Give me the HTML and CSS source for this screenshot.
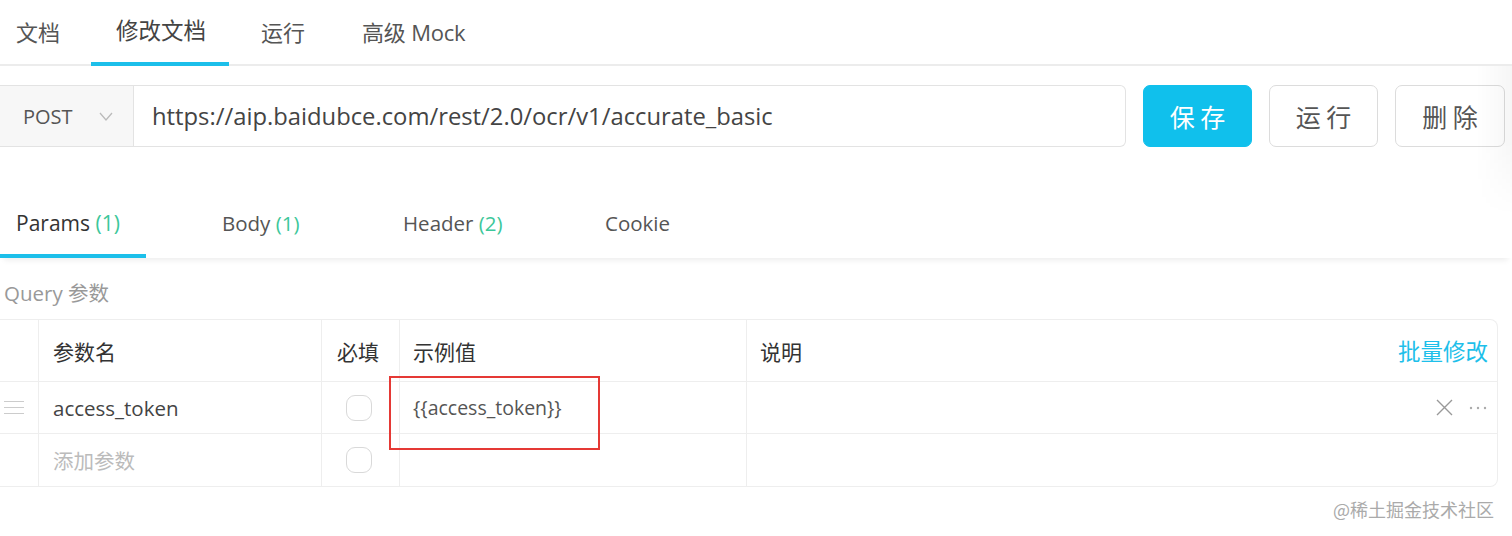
FILE: index.html
```html
<!DOCTYPE html>
<html lang="zh">
<head>
<meta charset="utf-8">
<link rel="stylesheet" href="styles.css">
</head>
<body>
<div class="page">
  <nav class="top-tabs">
    <div class="ttab">文档</div>
    <div class="ttab active">修改文档</div>
    <div class="ttab">运行</div>
    <div class="ttab">高级 Mock</div>
  </nav>

  <div class="url-row">
    <div class="url-box">
      <div class="method">POST
        <svg class="chev" width="14" height="9" viewBox="0 0 14 9"><path d="M1 1 L7 8 L13 1" fill="none" stroke="#bbb" stroke-width="1.3"/></svg>
      </div>
      <div class="url">https://aip.baidubce.com/rest/2.0/ocr/v1/accurate_basic</div>
    </div>
    <button class="btn primary">保 存</button>
    <button class="btn">运 行</button>
    <button class="btn last">删 除</button>
  </div>

  <nav class="sub-tabs">
    <div class="stab">Params <span class="cnt">(1)</span></div>
    <div class="stab">Body <span class="cnt">(1)</span></div>
    <div class="stab">Header <span class="cnt">(2)</span></div>
    <div class="stab">Cookie</div>
  </nav>

  <div class="section-title">Query 参数</div>

  <div class="table">
    <div class="row head">
      <div class="c c-handle"></div>
      <div class="c c-name">参数名</div>
      <div class="c c-req">必填</div>
      <div class="c c-val">示例值</div>
      <div class="c c-desc">说明<span class="bulk">批量修改</span></div>
    </div>
    <div class="row r1">
      <div class="c c-handle"><span class="grip"></span></div>
      <div class="c c-name">access_token</div>
      <div class="c c-req"><span class="chk"></span></div>
      <div class="c c-val"><span class="valtext">{{access_token}}</span><span class="hl"></span></div>
      <div class="c c-desc"><span class="acts">
        <svg width="17" height="17" viewBox="0 0 17 17"><path d="M1 1 L16 16 M16 1 L1 16" stroke="#999" stroke-width="1.4"/></svg>
        <svg width="18" height="4" viewBox="0 0 18 4"><circle cx="2" cy="2" r="1.2" fill="#aaa"/><circle cx="9" cy="2" r="1.2" fill="#aaa"/><circle cx="16" cy="2" r="1.2" fill="#aaa"/></svg>
      </span></div>
    </div>
    <div class="row r2">
      <div class="c c-handle"></div>
      <div class="c c-name ph">添加参数</div>
      <div class="c c-req"><span class="chk"></span></div>
      <div class="c c-val"></div>
      <div class="c c-desc"></div>
    </div>
  </div>

  <div class="edge-shade"></div>
  <div class="watermark">@稀土掘金技术社区</div>
</div>
</body>
</html>
```

FILE: styles.css
```css
* { box-sizing: border-box; }
html, body { margin: 0; padding: 0; background: #fff; }
body {
  font-family: "Open Sans", "Noto Sans CJK SC", sans-serif;
  color: #333;
  width: 1512px;
  height: 536px;
  overflow: hidden;
}
.page { position: relative; width: 1512px; height: 536px; }

.top-tabs {
  display: flex;
  height: 66px;
  border-bottom: 2px solid #ececec;
}
.ttab {
  font-size: 22px;
  color: #555;
  line-height: 64px;
  height: 66px;
}
.ttab:nth-child(1) { padding: 0 31px 0 16px; }
.ttab:nth-child(2) {
  color: #444;
  line-height: 62px;
  border-bottom: 4px solid #1cbfea;
  width: 138px;
  padding-left: 25px;
  margin-bottom: -2px;
  font-size: 22.5px;
}
.ttab:nth-child(3) { padding: 0 28px 0 32px; }
.ttab:nth-child(4) { padding-left: 29px; letter-spacing: -0.2px; }

.url-row {
  display: flex;
  margin-top: 19px;
  height: 62px;
  gap: 17px;
}
.url-box {
  width: 1126px;
  display: flex;
  border: 1px solid #e3e3e3;
  border-left: none;
  border-radius: 0 6px 6px 0;
}
.method {
  width: 134px;
  background: #f7f7f7;
  border-right: 1px solid #e3e3e3;
  display: flex;
  align-items: center;
  padding-left: 23px;
  font-size: 20px;
  color: #555;
}
.chev { margin-left: 26px; }
.url {
  font-size: 23.8px;
  color: #444;
  display: flex;
  align-items: center;
  padding-left: 18px;
}
.btn {
  width: 109px;
  height: 62px;
  border: 1px solid #dcdcdc;
  border-radius: 7px;
  background: #fff;
  font-family: "Noto Sans CJK SC", sans-serif;
  font-size: 25px;
  color: #555;
  padding: 0;
}
.btn.last { width: 110px; }
.btn.primary {
  background: #10c0ec;
  border-color: #10c0ec;
  color: #fff;
}

.sub-tabs {
  display: flex;
  margin-top: 46px;
  height: 65px;
  box-shadow: 0 6px 6px -4px rgba(0,0,0,0.08);
}
.stab {
  font-size: 20.5px;
  color: #555;
  line-height: 60px;
}
.stab:nth-child(1) { width: 146px; padding-left: 16px; color: #333; border-bottom: 4px solid #1cbfea; font-size: 21px; }
.stab:nth-child(2) { margin-left: 76px; width: 181px; }
.stab:nth-child(3) { width: 202px; }
.cnt { color: #3cc79a; }

.section-title {
  margin-top: 15px;
  padding-left: 4px;
  font-size: 20.5px;
  color: #999;
  line-height: 40px;
}

.table {
  margin-top: 6px;
  width: 1498px;
  border: 1px solid #eeeeee;
  border-left: none;
  border-radius: 0 8px 8px 0;
}
.row { display: flex; border-top: 1px solid #eeeeee; }
.row.head { border-top: none; height: 61px; }
.row.r1 { height: 52px; }
.row.r2 { height: 53px; }
.c {
  border-left: 1px solid #eeeeee;
  display: flex;
  align-items: center;
  font-size: 20.5px;
  color: #444;
}
.c-handle { width: 38px; border-left: none; justify-content: center; }
.c-name { width: 283px; padding-left: 14px; }
.c-req { width: 78px; justify-content: center; }
.c-val { width: 347px; padding-left: 13px; position: relative; }
.c-desc { flex: 1; padding-left: 13px; position: relative; }
.head .c { color: #333; font-size: 21px; }
.head .c-req { justify-content: flex-start; padding-left: 15px; }
.bulk {
  position: absolute;
  right: 9px;
  color: #1ebfea;
  font-size: 22.5px;
}
.grip {
  display: block;
  width: 20px;
  height: 13px;
  border-top: 1.5px solid #ccc;
  border-bottom: 1.5px solid #ccc;
  position: relative;
  margin-left: -10px;
}
.grip::after {
  content: "";
  position: absolute;
  left: 0; right: 0; top: 4.5px;
  border-top: 1.5px solid #ccc;
}
.chk {
  width: 26px;
  height: 26px;
  border: 1px solid #d9d9d9;
  border-radius: 9px;
  margin-left: -3px;
}
.valtext { color: #555; font-size: 19.5px; }
.hl {
  position: absolute;
  left: -11px;
  top: -6px;
  width: 211px;
  height: 74px;
  border: 2px solid #e53935;
  z-index: 2;
}
.ph { color: #bbb; }
.acts {
  position: absolute;
  right: 10px;
  display: flex;
  align-items: center;
  gap: 16px;
}

.edge-shade {
  position: absolute;
  right: 0;
  top: 66px;
  width: 36px;
  height: 150px;
  background: linear-gradient(to right, rgba(0,0,0,0), rgba(0,0,0,0.035));
  -webkit-mask-image: linear-gradient(to bottom, #000 50%, transparent);
  mask-image: linear-gradient(to bottom, #000 50%, transparent);
  pointer-events: none;
}

.watermark {
  position: absolute;
  right: 18px;
  top: 496px;
  font-family: "Noto Sans CJK SC", sans-serif;
  font-size: 18px;
  color: #aaa;
}
```
